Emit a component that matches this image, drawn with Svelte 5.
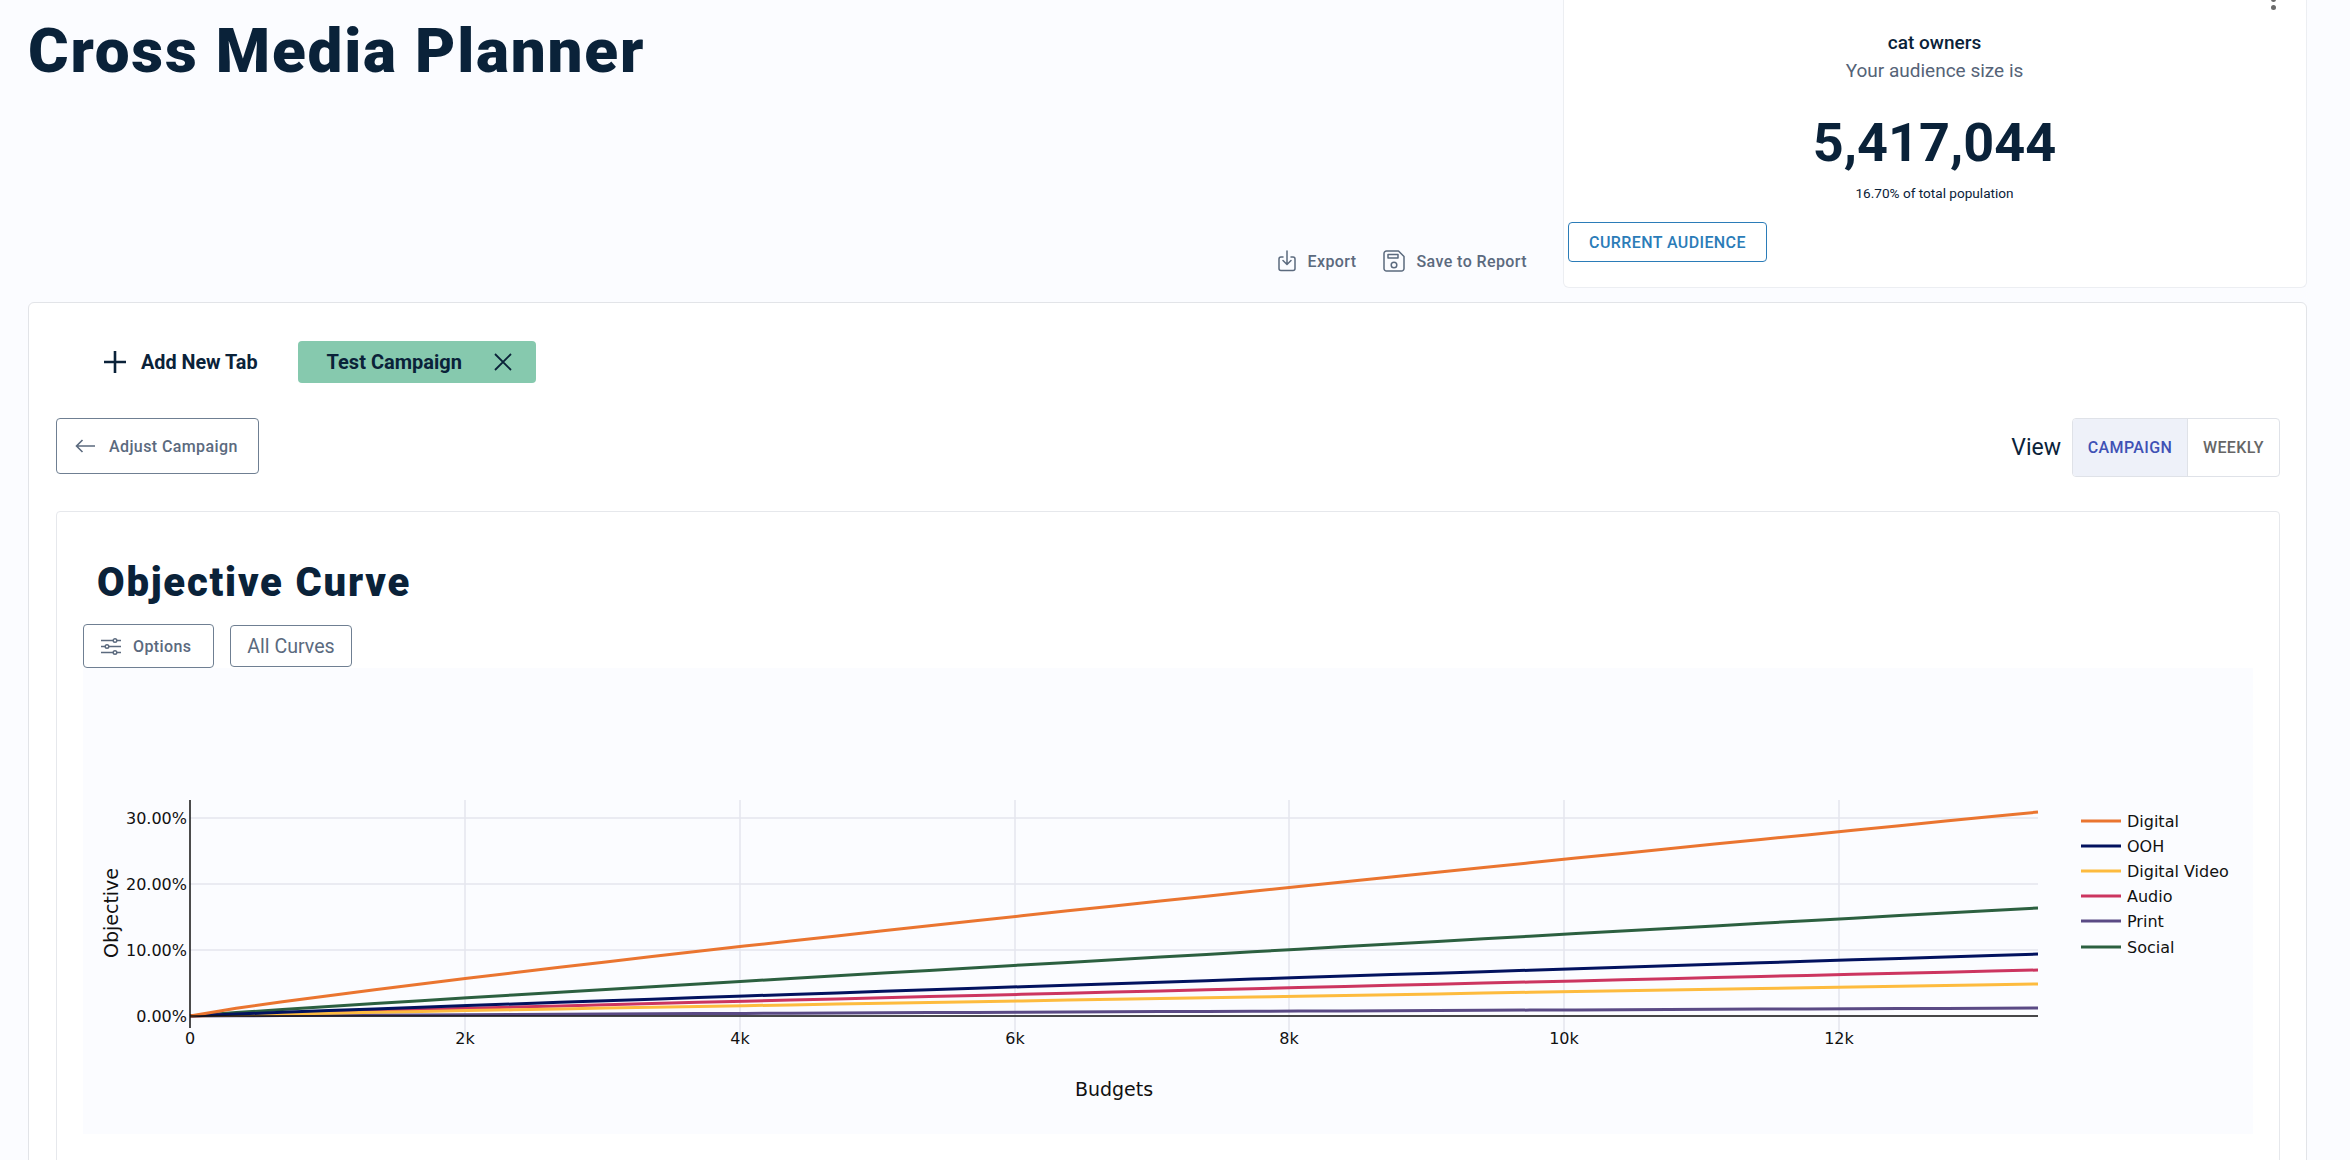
<script lang="ts">
  // chart is drawn in page coordinates (viewBox below starts at the panel's corner)
  const x0 = 189;
  const y0 = 1016;
  const xEnd = 2037;

  const series = [
    { name: 'Digital', color: '#ea7530', end: 812, bend: 0.89 },
    { name: 'OOH', color: '#02125f', end: 954, bend: 0.94 },
    { name: 'Digital Video', color: '#fdbb3f', end: 984, bend: 0.94 },
    { name: 'Audio', color: '#cc3560', end: 970, bend: 0.94 },
    { name: 'Print', color: '#5a4a85', end: 1008, bend: 0.94 },
    { name: 'Social', color: '#2c6040', end: 908, bend: 0.94 }
  ];

  const legendY = [821, 846, 871, 896, 921, 947];
  const xTicks = [
    { x: 189, label: '0' },
    { x: 464, label: '2k' },
    { x: 739, label: '4k' },
    { x: 1014, label: '6k' },
    { x: 1288, label: '8k' },
    { x: 1563, label: '10k' },
    { x: 1838, label: '12k' }
  ];
  const yTicks = [
    { y: 818, label: '30.00%' },
    { y: 884, label: '20.00%' },
    { y: 950, label: '10.00%' },
    { y: 1016, label: '0.00%' }
  ];

  function curve(s) {
    const pts = [];
    for (let i = 0; i <= 40; i++) {
      const t = i / 40;
      const x = x0 + (xEnd - x0) * t;
      const y = y0 - (y0 - s.end) * Math.pow(t, s.bend);
      pts.push(`${x.toFixed(1)},${y.toFixed(1)}`);
    }
    return pts.join(' ');
  }
</script>

<div class="page">
  <header class="top">
    <h1>Cross Media Planner</h1>
    <div class="actions">
      <button class="link">
        <svg width="18" height="22" viewBox="0 0 18 22" fill="none" stroke="#5b6a7e" stroke-width="1.500" stroke-linecap="round" stroke-linejoin="round">
          <path d="M5 7H3a2 2 0 0 0-2 2v9.500a2 2 0 0 0 2 2h12a2 2 0 0 0 2-2V9a2 2 0 0 0-2-2h-2" />
          <path d="M9 1v13M5 10.500l4 4 4-4" />
        </svg>
        Export
      </button>
      <button class="link">
        <svg width="22" height="22" viewBox="0 0 22 22" fill="none" stroke="#5b6a7e" stroke-width="1.500" stroke-linejoin="round">
          <path d="M3.500 1h12l5.500 5.500V18.500a2.500 2.500 0 0 1-2.500 2.500h-15A2.500 2.500 0 0 1 1 18.500v-15A2.500 2.500 0 0 1 3.500 1z" />
          <rect x="5" y="4.500" width="10" height="3.500" />
          <circle cx="11" cy="15" r="2.800" />
        </svg>
        Save to Report
      </button>
    </div>
    <section class="audience">
      <div class="kebab"><i></i><i></i></div>
      <div class="aud-name">cat owners</div>
      <div class="aud-sub">Your audience size is</div>
      <div class="aud-num">5,417,044</div>
      <div class="aud-pct">16.70% of total population</div>
      <button class="current">CURRENT AUDIENCE</button>
    </section>
  </header>

  <main class="card">
    <div class="tabs">
      <button class="add-tab">
        <svg width="22" height="22" viewBox="0 0 22 22" stroke="#0a2239" stroke-width="2.600" fill="none">
          <path d="M11 0v22M0 11h22" />
        </svg>
        Add New Tab
      </button>
      <div class="tab">
        Test Campaign
        <svg width="18" height="18" viewBox="0 0 18 18" stroke="#0a2239" stroke-width="1.800" fill="none">
          <path d="M1 1l16 16M17 1L1 17" />
        </svg>
      </div>
    </div>

    <div class="toolbar">
      <button class="adjust">
        <svg width="20" height="14" viewBox="0 0 20 14" fill="none" stroke="#5b6a7e" stroke-width="1.600">
          <path d="M20 7H1.500M7.500 1l-6 6 6 6" />
        </svg>
        Adjust Campaign
      </button>
      <div class="view">
        <span>View</span>
        <div class="toggle">
          <div class="opt active">CAMPAIGN</div>
          <div class="opt">WEEKLY</div>
        </div>
      </div>
    </div>

    <section class="panel">
      <h2>Objective Curve</h2>
      <div class="chart-btns">
        <button class="options">
          <svg width="20" height="17" viewBox="0 0 20 17" fill="none" stroke="#5b6a7e" stroke-width="1.400">
            <path d="M0 2.500h20M0 8.500h20M0 14.500h20" />
            <circle cx="14" cy="2.500" r="1.800" fill="#fff" />
            <circle cx="6" cy="8.500" r="1.800" fill="#fff" />
            <circle cx="14" cy="14.500" r="1.800" fill="#fff" />
          </svg>
          Options
        </button>
        <button class="curves">All Curves</button>
      </div>
      <div class="chart">
        <svg width="2170" height="466" viewBox="82 668 2170 466">
          {#each xTicks.slice(1) as t}
            <line x1={t.x} x2={t.x} y1="800" y2="1040" stroke="#e4e6ee" stroke-width="1.500" />
          {/each}
          {#each yTicks as t}
            <line x1={x0} x2={xEnd} y1={t.y} y2={t.y} stroke="#e4e6ee" stroke-width="1.500" />
          {/each}
          {#each [...series].reverse() as s}
            <polyline points={curve(s)} fill="none" stroke={s.color} stroke-width="3" />
          {/each}
          <line x1={x0} x2={xEnd} y1={y0} y2={y0} stroke="#111" stroke-width="1.500" />
          <line x1={x0} x2={x0} y1="800" y2="1028" stroke="#111" stroke-width="1.500" />

          {#each xTicks as t}
            <text x={t.x} y="1044" text-anchor="middle" class="tick">{t.label}</text>
          {/each}
          {#each yTicks as t}
            <text x="186" y={t.y + 6} text-anchor="end" class="tick">{t.label}</text>
          {/each}
          <text x="1113" y="1096" text-anchor="middle" class="axis">Budgets</text>
          <text transform="translate(117 913) rotate(-90)" text-anchor="middle" class="axis">Objective</text>

          {#each series as s, i}
            <line x1="2080" x2="2120" y1={legendY[i]} y2={legendY[i]} stroke={s.color} stroke-width="3" />
            <text x="2126" y={legendY[i] + 6} class="tick">{s.name}</text>
          {/each}
        </svg>
      </div>
    </section>
  </main>
</div>

<style>
  :global(body) {
    margin: 0;
    background: #fbfcff;
    overflow: hidden;
  }

  .page {
    height: 1160px;
    overflow: hidden;
    box-sizing: border-box;
    padding: 0 43px 0 28px;
    font-family: Roboto, "Liberation Sans", sans-serif;
    color: #0a2239;
  }

  button {
    font-family: inherit;
    background: none;
    cursor: pointer;
  }

  .top {
    display: flex;
    height: 288px;
    margin-bottom: 14px;
  }

  h1 {
    margin: 15px auto 0 0;
    font-size: 62px;
    line-height: 72px;
    font-weight: 900;
    letter-spacing: 1.800px;
    color: #0a2239;
  }

  .actions {
    display: flex;
    align-items: center;
    gap: 26px;
    align-self: flex-end;
    margin-right: 36px;
    margin-bottom: 16px;
  }

  .link {
    display: flex;
    align-items: center;
    gap: 12px;
    border: none;
    padding: 0;
    font-size: 16px;
    font-weight: 500;
    letter-spacing: 0.4px;
    color: #5b6a7e;
  }

  .audience {
    position: relative;
    width: 744px;
    box-sizing: border-box;
    padding: 32px 5px 0 4px;
    background: #fff;
    border: 1px solid #eceef2;
    border-top: none;
    border-radius: 0 0 6px 6px;
    text-align: center;
  }

  .kebab {
    position: absolute;
    top: -3px;
    right: 30px;
    display: flex;
    flex-direction: column;
    gap: 3px;
  }

  .kebab i {
    width: 5px;
    height: 5px;
    border-radius: 50%;
    background: #6b6b6b;
  }

  .aud-name {
    font-size: 19px;
    line-height: 22px;
    font-weight: 500;
  }

  .aud-sub {
    margin-top: 6px;
    font-size: 19px;
    line-height: 22px;
    color: #556377;
  }

  .aud-num {
    margin-top: 29px;
    font-size: 54px;
    line-height: 64px;
    font-weight: 700;
  }

  .aud-pct {
    margin-top: 9px;
    font-size: 13.600px;
    line-height: 18px;
  }

  .current {
    display: block;
    margin-top: 20px;
    width: 199px;
    height: 40px;
    padding: 0;
    border: 1px solid #2b7cb8;
    border-radius: 4px;
    background: #fff;
    color: #2b7cb8;
    font-size: 16px;
    font-weight: 500;
    letter-spacing: 0.4px;
  }

  .card {
    box-sizing: border-box;
    height: 900px;
    padding: 38px 26px 0 27px;
    background: #fff;
    border: 1px solid #e2e4e8;
    border-radius: 6px;
  }

  .tabs {
    display: flex;
    align-items: center;
    height: 42px;
    padding-left: 48px;
    gap: 40px;
  }

  .add-tab {
    display: flex;
    align-items: center;
    gap: 15px;
    padding: 0;
    border: none;
    font-size: 19.800px;
    font-weight: 700;
    color: #0a2239;
  }

  .tab {
    display: flex;
    align-items: center;
    justify-content: space-between;
    box-sizing: border-box;
    width: 238px;
    height: 42px;
    padding: 0 24px 0 29px;
    background: #86c9ae;
    border-radius: 4px;
    font-size: 20px;
    font-weight: 700;
  }

  .toolbar {
    display: flex;
    align-items: flex-start;
    justify-content: space-between;
    margin-top: 35px;
  }

  .adjust {
    display: flex;
    align-items: center;
    gap: 14px;
    height: 56px;
    width: 203px;
    padding: 0 0 0 18px;
    border: 1px solid #6f7f92;
    border-radius: 4px;
    background: #fff;
    font-size: 16px;
    font-weight: 500;
    letter-spacing: 0.4px;
    color: #5b6a7e;
  }

  .view {
    display: flex;
    align-items: center;
    gap: 11px;
    font-size: 23px;
  }

  .toggle {
    display: flex;
    height: 59px;
    box-sizing: border-box;
    border: 1px solid #dfe2e8;
    border-radius: 4px;
    overflow: hidden;
    font-size: 16px;
    font-weight: 500;
    letter-spacing: 0.4px;
  }

  .opt {
    display: flex;
    align-items: center;
    justify-content: center;
    width: 91px;
    color: #666;
  }

  .opt.active {
    width: 114px;
    background: #eef1f9;
    color: #3f51b5;
    border-right: 1px solid #dfe2e8;
  }

  .panel {
    margin-top: 34px;
    box-sizing: border-box;
    height: 700px;
    padding: 0 27px 0 26px;
    border: 1px solid #e6e8ec;
    border-radius: 4px;
  }

  h2 {
    margin: 47px 0 0 14px;
    font-size: 40px;
    line-height: 48px;
    font-weight: 900;
    letter-spacing: 1.800px;
    color: #0a2239;
  }

  .chart-btns {
    display: flex;
    align-items: center;
    gap: 16px;
    margin-top: 17px;
  }

  .options {
    display: flex;
    align-items: center;
    gap: 12px;
    box-sizing: border-box;
    width: 131px;
    height: 44px;
    padding: 0 0 0 17px;
    border: 1px solid #6f7f92;
    border-radius: 4px;
    font-size: 16px;
    font-weight: 500;
    letter-spacing: 0.4px;
    color: #5b6a7e;
  }

  .curves {
    box-sizing: border-box;
    width: 122px;
    height: 42px;
    padding: 0;
    border: 1px solid #6f7f92;
    border-radius: 4px;
    font-size: 19.600px;
    color: #5b6a7e;
  }

  .chart {
    width: 2170px;
    height: 466px;
    background: #fbfcff;
  }

  .chart svg {
    display: block;
  }

  .tick {
    font-family: "DejaVu Sans", sans-serif;
    font-size: 16px;
    fill: #111;
  }

  .axis {
    font-family: "DejaVu Sans", sans-serif;
    font-size: 19px;
    fill: #111;
  }
</style>
